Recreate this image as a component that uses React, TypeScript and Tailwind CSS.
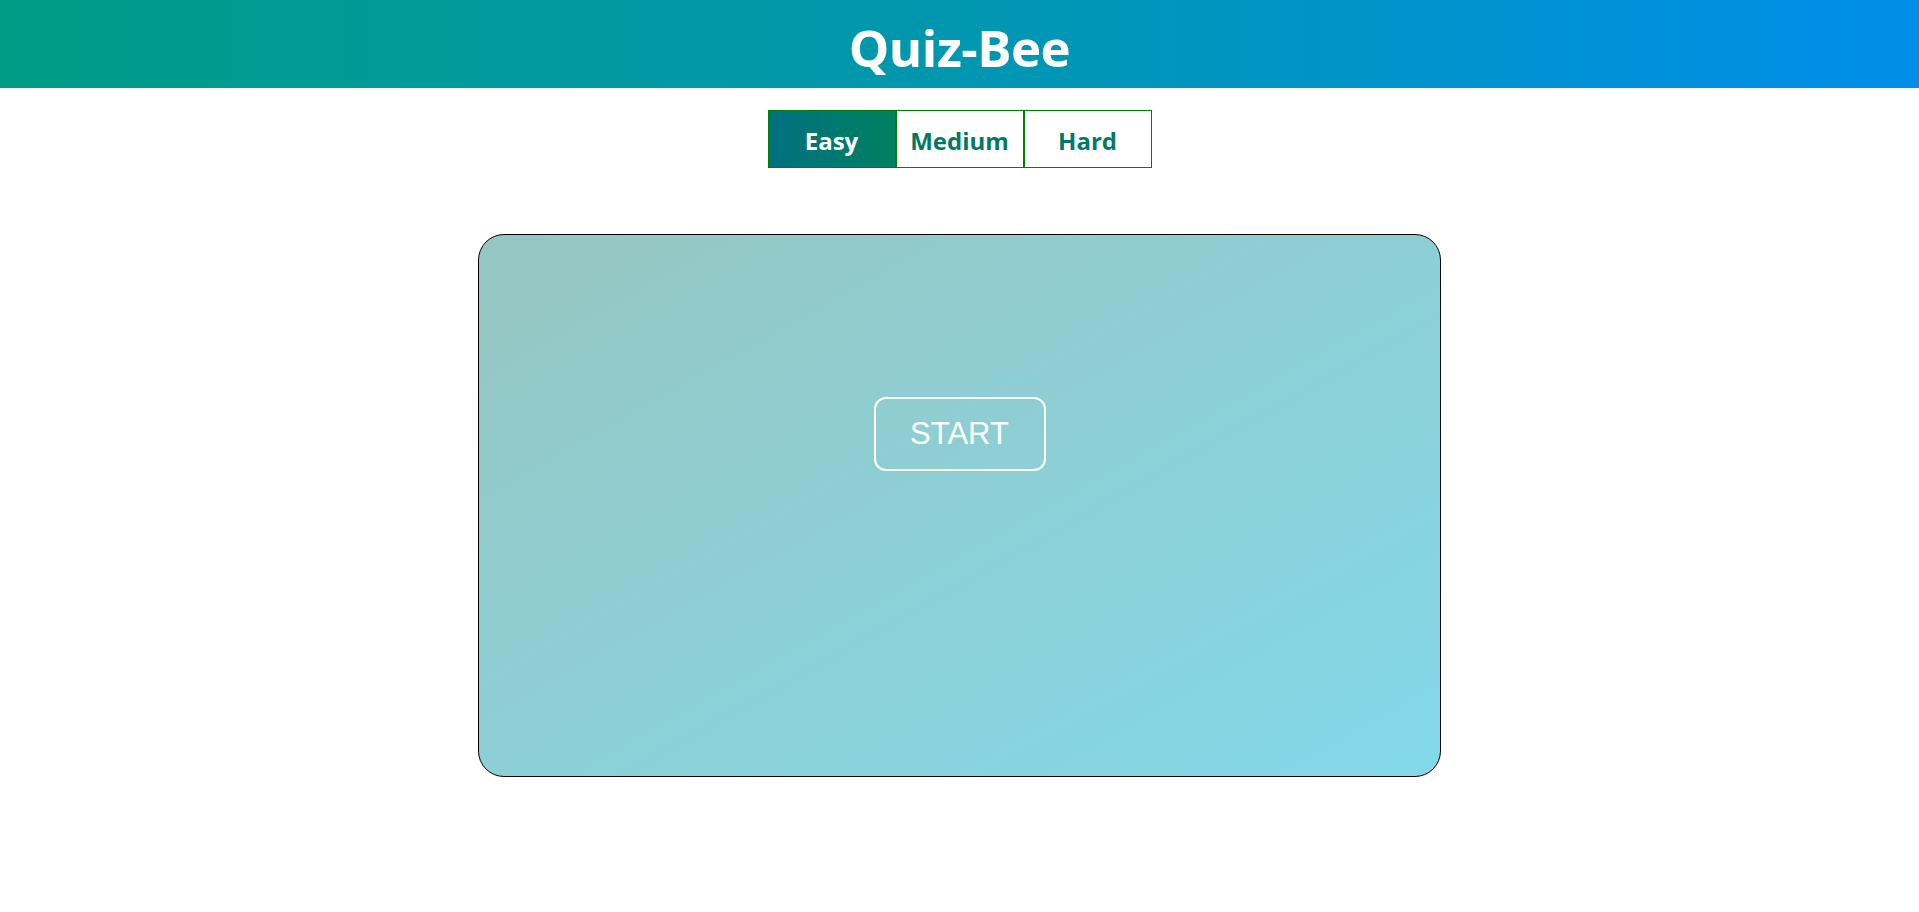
import React from "react";

const levels = ["Easy", "Medium", "Hard"];

const App = () => {
  return (
    <div className="min-h-screen bg-white" style={{ fontFamily: '"Open Sans", "Noto Sans", sans-serif' }}>
      <header className="h-[88px] flex items-center justify-center pt-[6px] bg-gradient-to-r from-[#009c86] via-[#0097b0] to-[#008eeb]">
        <h1 className="text-[51px] font-bold text-white tracking-[-0.5px]">Quiz-Bee</h1>
      </header>

      <div className="flex justify-center mt-[22px]">
        {levels.map((l, i) => (
          <button
            key={l}
            className={
              i === 0
                ? "w-[128px] h-[58px] pt-[3px] border border-[#008000] text-[24px] font-bold text-white bg-gradient-to-r from-[#00707f] to-[#008060]"
                : "w-[128px] h-[58px] pt-[3px] border border-[#008000] text-[24px] font-bold text-[#007a63] bg-white"
            }
          >
            {l}
          </button>
        ))}
      </div>

      <div className="flex justify-center mt-[66px]">
        <div className="w-[963px] h-[543px] rounded-[26px] border border-black bg-gradient-to-br from-[#96c6c1] to-[#82d8ea] flex flex-col items-center pt-[162px]">
          <button
            className="w-[172px] h-[74px] rounded-[12px] border-2 border-white text-white text-[31px]"
            style={{ fontFamily: '"Liberation Sans", Arial, sans-serif' }}
          >
            START
          </button>
        </div>
      </div>
    </div>
  );
};

export default App;
